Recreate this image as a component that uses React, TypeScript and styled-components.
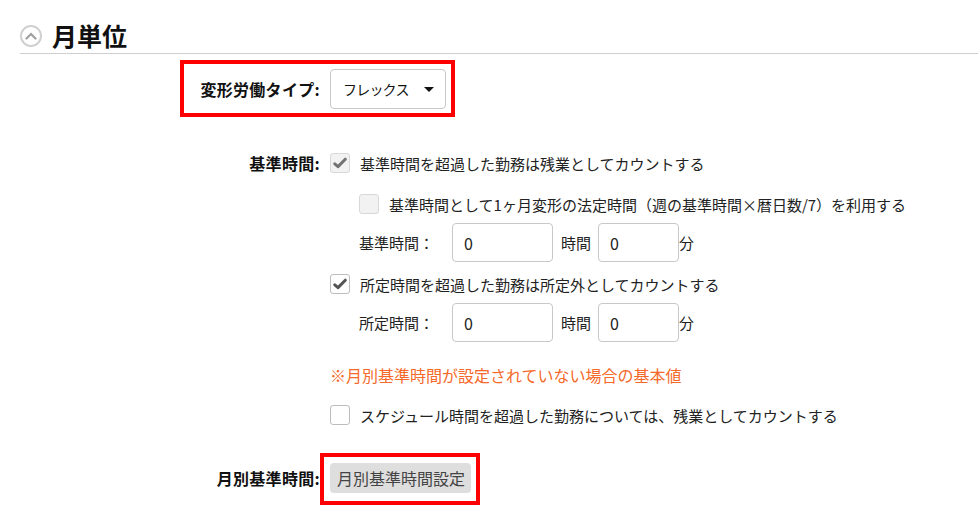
import React from "react";
import styled, { createGlobalStyle } from "styled-components";

const GlobalStyle = createGlobalStyle`
  body {
    margin: 0;
    background: #fff;
    font-family: "Noto Sans CJK JP", "Noto Sans", sans-serif;
    color: #222;
  }
`;

const Section = styled.div`
  padding: 0 0 40px 20px;
  width: 958px;
`;

// Header

const Header = styled.div`
  display: flex;
  align-items: center;
  gap: 10px;
  margin-top: 18px;
  height: 35px;
  border-bottom: 1px solid #cfcfcf;
`;

const CollapseIcon = styled.span`
  width: 18px;
  height: 18px;
  border: 2px solid #d0d0d0;
  border-radius: 50%;
  display: flex;
  align-items: center;
  justify-content: center;
`;

const Title = styled.h2`
  margin: 0;
  font-size: 25px;
  font-weight: 700;
  color: #111;
  line-height: 1;
`;

// Form rows

const Row = styled.div<{ $top: number }>`
  position: relative;
  display: grid;
  grid-template-columns: 300px auto;
  column-gap: 10px;
  align-items: start;
  justify-items: start;
  margin-top: ${(p) => p.$top}px;
`;

const Label = styled.div<{ $height: number }>`
  justify-self: stretch;
  height: ${(p) => p.$height}px;
  display: flex;
  align-items: center;
  justify-content: flex-end;
  font-size: 16px;
  letter-spacing: 0.3px;
  font-weight: 700;
  color: #111;
`;

const Highlight = styled.div<{ $left: number; $top: number; $w: number; $h: number }>`
  position: absolute;
  left: ${(p) => p.$left}px;
  top: ${(p) => p.$top}px;
  width: ${(p) => p.$w}px;
  height: ${(p) => p.$h}px;
  box-sizing: border-box;
  border: 4px solid #ff0000;
  pointer-events: none;
`;

const Select = styled.div`
  width: 116px;
  height: 40px;
  box-sizing: border-box;
  border: 1px solid #c8c8c8;
  border-radius: 4px;
  display: flex;
  align-items: center;
  padding: 0 11px 0 12px;
  font-size: 14px;
  letter-spacing: -0.8px;
  color: #111;
`;

const Caret = styled.span`
  margin-left: auto;
  width: 0;
  height: 0;
  border-left: 5px solid transparent;
  border-right: 5px solid transparent;
  border-top: 5px solid #111;
`;

const Content = styled.div`
  display: flex;
  flex-direction: column;
  align-items: flex-start;
`;

const Line = styled.div<{ $gap?: number; $indent?: number }>`
  display: flex;
  align-items: center;
  gap: 10px;
  height: 24px;
  margin-top: ${(p) => p.$gap ?? 0}px;
  margin-left: ${(p) => p.$indent ?? 0}px;
  font-size: 15px;
  color: #222;
  white-space: nowrap;
`;

const Box = styled.span<{ $disabled?: boolean }>`
  width: 20px;
  height: 20px;
  box-sizing: border-box;
  flex: none;
  border: 1px solid ${(p) => (p.$disabled ? "#d8d8d8" : "#bdbdbd")};
  background: ${(p) => (p.$disabled ? "#f2f2f2" : "#fff")};
  border-radius: 3px;
  display: flex;
  align-items: center;
  justify-content: center;
`;

const Check = ({ disabled }: { disabled?: boolean }) => (
  <svg width="14" height="12" viewBox="0 0 14 12">
    <path
      d="M1.8 6.8 L5 9.6 L12.3 2.2"
      fill="none"
      stroke={disabled ? "#737373" : "#555"}
      strokeWidth="3"
      strokeLinecap="round"
      strokeLinejoin="round"
    />
  </svg>
);

const TimeRow = styled.div<{ $gap: number }>`
  display: flex;
  align-items: center;
  margin-top: ${(p) => p.$gap}px;
  margin-left: 29px;
  font-size: 15px;
  color: #222;
`;

const TimeLabel = styled.span`
  width: 93px;
`;

const Unit = styled.span`
  padding: 0 7px 0 8px;
`;

const NumInput = styled.div<{ $w: number }>`
  width: ${(p) => p.$w}px;
  height: 39px;
  box-sizing: border-box;
  border: 1px solid #c8c8c8;
  border-radius: 4px;
  display: flex;
  align-items: center;
  padding-left: 11px;
  font-size: 16px;
  color: #222;
`;

const Note = styled.div<{ $gap: number }>`
  margin-top: ${(p) => p.$gap}px;
  height: 24px;
  line-height: 24px;
  font-size: 16px;
  color: #f5692a;
`;

const Button = styled.div`
  height: 30px;
  box-sizing: border-box;
  padding: 0 6px 0 7px;
  display: flex;
  align-items: center;
  background: #dedede;
  border-radius: 4px;
  font-size: 16px;
  color: #444;
`;

type CheckLineProps = {
  checked?: boolean;
  disabled?: boolean;
  gap?: number;
  indent?: number;
  children: React.ReactNode;
};

const CheckLine = (props: CheckLineProps) => (
  <Line $gap={props.gap} $indent={props.indent}>
    <Box $disabled={props.disabled}>{props.checked && <Check disabled={props.disabled} />}</Box>
    <span>{props.children}</span>
  </Line>
);

const TimeInputs = ({ label, gap }: { label: string; gap: number }) => (
  <TimeRow $gap={gap}>
    <TimeLabel>{label}</TimeLabel>
    <NumInput $w={101}>0</NumInput>
    <Unit>時間</Unit>
    <NumInput $w={81}>0</NumInput>
    <span>分</span>
  </TimeRow>
);

export default function App() {
  return (
    <>
      <GlobalStyle />
      <Section>
        <Header>
          <CollapseIcon>
            <svg width="12" height="8" viewBox="0 0 12 8">
              <path d="M1.5 6.5 L6 2 L10.5 6.5" fill="none" stroke="#a0a0a0" strokeWidth="2.2" strokeLinecap="round" />
            </svg>
          </CollapseIcon>
          <Title>月単位</Title>
        </Header>

        <Row $top={15}>
          <Label $height={40}>変形労働タイプ:</Label>
          <Select>
            フレックス
            <Caret />
          </Select>
          <Highlight $left={160} $top={-9} $w={275} $h={57} />
        </Row>

        <Row $top={42}>
          <Label $height={24}>基準時間:</Label>
          <Content>
            <CheckLine checked disabled>基準時間を超過した勤務は残業としてカウントする</CheckLine>
            <CheckLine disabled gap={17} indent={29}>
              基準時間として1ヶ月変形の法定時間（週の基準時間×暦日数/7）を利用する
            </CheckLine>
            <TimeInputs label="基準時間：" gap={7} />
            <CheckLine checked gap={10}>所定時間を超過した勤務は所定外としてカウントする</CheckLine>
            <TimeInputs label="所定時間：" gap={7} />
            <Note $gap={21}>※月別基準時間が設定されていない場合の基本値</Note>
            <CheckLine gap={16}>スケジュール時間を超過した勤務については、残業としてカウントする</CheckLine>
          </Content>
        </Row>

        <Row $top={36}>
          <Label $height={30}>月別基準時間:</Label>
          <Button>月別基準時間設定</Button>
          <Highlight $left={300} $top={-10} $w={160} $h={52} />
        </Row>
      </Section>
    </>
  );
}
